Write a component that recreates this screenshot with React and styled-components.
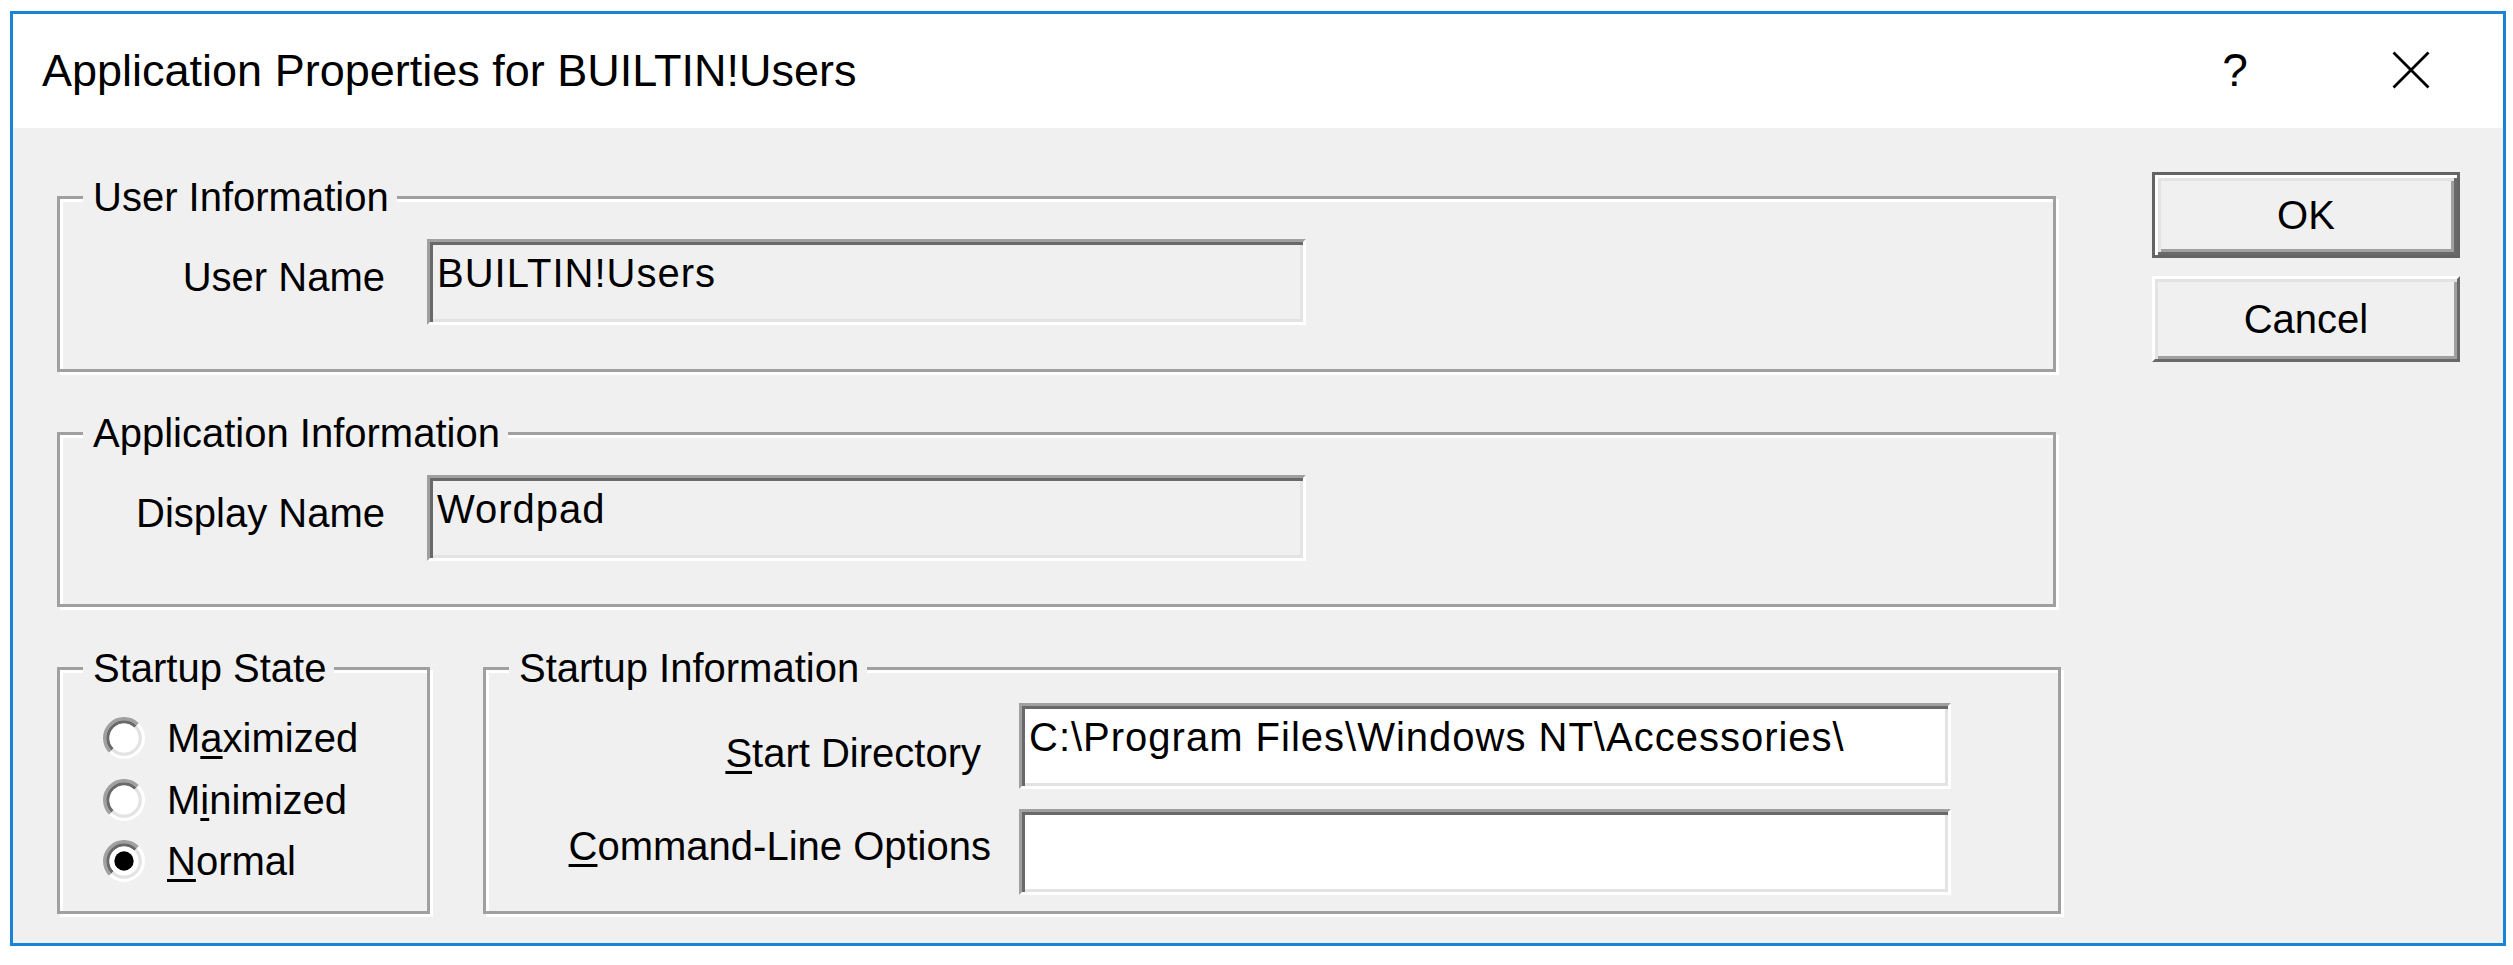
import React from 'react';
import styled, { createGlobalStyle } from 'styled-components';

const GlobalStyle = createGlobalStyle`
  html, body {
    margin: 0;
    padding: 0;
    background: #ffffff;
    overflow: hidden;
  }
  body {
    font-family: "Liberation Sans", Arial, sans-serif;
    color: #000000;
  }
`;

const Page = styled.div`
  width: 2513px;
  height: 965px;
  box-sizing: border-box;
  padding: 11px 0 0 10px;
  background: #ffffff;
`;

const Window = styled.div`
  width: 2496px;
  height: 935px;
  box-sizing: border-box;
  border: 3px solid #1883d7;
  display: flex;
  flex-direction: column;
  background: #ffffff;
`;

const TitleBar = styled.div`
  height: 114px;
  flex-shrink: 0;
  display: flex;
  align-items: center;
  padding: 0 4px 0 29px;
  background: #ffffff;
`;

const TitleText = styled.div`
  flex: 1;
  font-family: "Liberation Sans", Arial, sans-serif;
  font-size: 45px;
  line-height: 52px;
  color: #000000;
  white-space: nowrap;
`;

const CaptionButton = styled.div`
  width: 176px;
  height: 114px;
  display: flex;
  align-items: center;
  justify-content: center;
  font-family: "Liberation Sans", Arial, sans-serif;
  font-size: 46px;
  color: #000000;
  margin-top: -3px;
`;

const Client = styled.div`
  flex: 1;
  display: flex;
  gap: 96px;
  padding: 44px 43px 29px 44px;
  background: #f0f0f0;
  box-sizing: border-box;
  font-size: 40px;
  line-height: 46px;
`;

const GroupsColumn = styled.div`
  flex: 1;
  display: flex;
  flex-direction: column;
  gap: 60px;
  margin-top: 24px;
`;

const Group = styled.div`
  position: relative;
  box-sizing: border-box;
  border: 3px solid #a0a0a0;
  box-shadow: inset 3px 3px 0 #ffffff, 3px 3px 0 #ffffff;
  padding: ${(p) => p.$pad};
  ${(p) => (p.$width ? `width: ${p.$width}px; flex-shrink: 0;` : 'flex: 1;')}
`;

const Legend = styled.div`
  position: absolute;
  top: -25px;
  left: 23px;
  padding: 0 8px 0 10px;
  background: #f0f0f0;
  font-size: 40px;
  line-height: 46px;
  white-space: nowrap;
`;

const FieldGrid = styled.div`
  display: grid;
  grid-template-columns: ${(p) => p.$cols};
  column-gap: ${(p) => p.$gap}px;
  row-gap: 20px;
  align-items: start;
`;

const Label = styled.div`
  justify-self: end;
  text-align: right;
  white-space: nowrap;
  margin-top: ${(p) => p.$top}px;
  margin-right: ${(p) => p.$right || 0}px;
  font-size: 40px;
  line-height: 46px;
`;

const Edit = styled.div`
  height: 86px;
  box-sizing: border-box;
  border: 3px solid;
  border-color: #a0a0a0 #ffffff #ffffff #a0a0a0;
  box-shadow: inset 3px 3px 0 #696969, inset -3px -3px 0 #e3e3e3;
  background: ${(p) => (p.$readOnly ? '#f0f0f0' : '#ffffff')};
  padding: 8px 6px 0 7px;
  font-size: 40px;
  line-height: 46px;
  letter-spacing: 1px;
  white-space: nowrap;
  overflow: hidden;
`;

const BottomRow = styled.div`
  display: flex;
  gap: 53px;
  margin-right: -5px;
`;

const RadioList = styled.div`
  display: flex;
  flex-direction: column;
  gap: 15.5px;
`;

const RadioItem = styled.div`
  display: flex;
  align-items: center;
  gap: 22px;
  height: 46px;
  font-size: 40px;
  line-height: 46px;
  white-space: nowrap;
`;

const Key = styled.span`
  text-decoration: underline;
  text-decoration-thickness: 3px;
  text-underline-offset: 4px;
`;

const ButtonColumn = styled.div`
  width: 308px;
  flex-shrink: 0;
  display: flex;
  flex-direction: column;
  gap: 18px;
`;

const Button = styled.div`
  height: 86px;
  box-sizing: border-box;
  display: flex;
  align-items: center;
  justify-content: center;
  background: #f0f0f0;
  font-size: 40px;
  line-height: 46px;
  border: 3px solid;
  ${(p) =>
    p.$default
      ? `
    border-color: #646464;
    box-shadow: inset 3px 3px 0 #ffffff, inset -3px -3px 0 #696969,
      inset 6px 6px 0 #e3e3e3, inset -6px -6px 0 #a0a0a0;
  `
      : `
    border-color: #ffffff #696969 #696969 #ffffff;
    box-shadow: inset 3px 3px 0 #e3e3e3, inset -3px -3px 0 #a0a0a0;
  `}
`;

const RadioSvg = styled.svg`
  width: 42px;
  height: 42px;
  flex-shrink: 0;
  display: block;
`;

function Radio({ checked }) {
  return (
    <RadioSvg viewBox="0 0 13 13">
      <path d="M2.257 10.743 A6 6 0 0 1 10.743 2.257" fill="none" stroke="#a0a0a0" strokeWidth="1" />
      <path d="M10.743 2.257 A6 6 0 0 1 2.257 10.743" fill="none" stroke="#ffffff" strokeWidth="1" />
      <path d="M2.964 10.036 A5 5 0 0 1 10.036 2.964" fill="none" stroke="#696969" strokeWidth="1" />
      <path d="M10.036 2.964 A5 5 0 0 1 2.964 10.036" fill="none" stroke="#e3e3e3" strokeWidth="1" />
      <circle cx="6.5" cy="6.5" r="4.5" fill="#ffffff" />
      {checked && <circle cx="6.5" cy="6.5" r="3" fill="#000000" />}
    </RadioSvg>
  );
}

function CloseIcon() {
  return (
    <svg width="38" height="38" viewBox="0 0 38 38">
      <path d="M1.5 1.5 L36.5 36.5 M36.5 1.5 L1.5 36.5" stroke="#000000" strokeWidth="2.8" fill="none" />
    </svg>
  );
}

export default function App() {
  return (
    <>
      <GlobalStyle />
      <Page>
        <Window>
          <TitleBar>
            <TitleText>Application Properties for BUILTIN!Users</TitleText>
            <CaptionButton>?</CaptionButton>
            <CaptionButton>
              <CloseIcon />
            </CaptionButton>
          </TitleBar>
          <Client>
            <GroupsColumn>
              <Group $pad="40px 0 43px 0">
                <Legend>User Information</Legend>
                <FieldGrid $cols="325px 879px" $gap={42}>
                  <Label $top={15}>User Name</Label>
                  <Edit $readOnly>BUILTIN!Users</Edit>
                </FieldGrid>
              </Group>
              <Group $pad="40px 0 43px 0">
                <Legend>Application Information</Legend>
                <FieldGrid $cols="325px 879px" $gap={42}>
                  <Label $top={15}>Display Name</Label>
                  <Edit $readOnly>Wordpad</Edit>
                </FieldGrid>
              </Group>
              <BottomRow>
                <Group $width={373} $pad="45px 0 26px 43px">
                  <Legend>Startup State</Legend>
                  <RadioList>
                    <RadioItem>
                      <Radio />
                      <span>
                        M<Key>a</Key>ximized
                      </span>
                    </RadioItem>
                    <RadioItem>
                      <Radio />
                      <span>
                        M<Key>i</Key>nimized
                      </span>
                    </RadioItem>
                    <RadioItem>
                      <Radio checked />
                      <span>
                        <Key>N</Key>ormal
                      </span>
                    </RadioItem>
                  </RadioList>
                </Group>
                <Group $pad="33px 107px 16px 0">
                  <Legend>Startup Information</Legend>
                  <FieldGrid $cols="1fr 932px" $gap={28}>
                    <Label $top={27} $right={10}>
                      <Key>S</Key>tart Directory
                    </Label>
                    <Edit>C:\Program Files\Windows NT\Accessories\</Edit>
                    <Label $top={14}>
                      <Key>C</Key>ommand-Line Options
                    </Label>
                    <Edit />
                  </FieldGrid>
                </Group>
              </BottomRow>
            </GroupsColumn>
            <ButtonColumn>
              <Button $default>OK</Button>
              <Button>Cancel</Button>
            </ButtonColumn>
          </Client>
        </Window>
      </Page>
    </>
  );
}
